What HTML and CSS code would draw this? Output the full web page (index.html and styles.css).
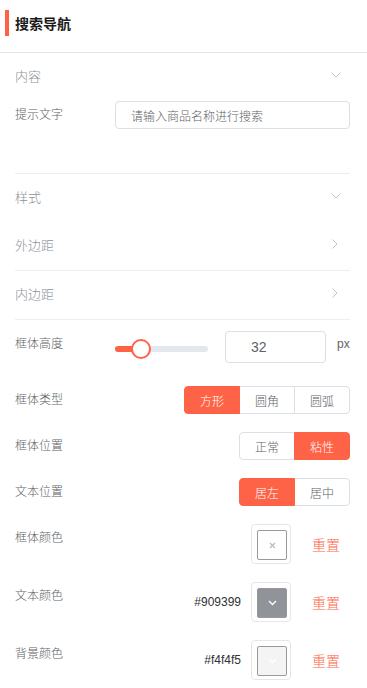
FILE: index.html
```html
<!DOCTYPE html>
<html lang="zh-CN">
<head>
  <meta charset="UTF-8" />
  <meta name="viewport" content="width=device-width, initial-scale=1.0"/>
  <title>搜索导航</title>
  <link rel="stylesheet" href="styles.css">
</head>
<body>

  <div class="panel-title"><span class="bar"></span>搜索导航</div>

  <div class="panel-body">

    <div class="collapse-item">
      <div class="collapse-head">
        <span>内容</span>
        <svg class="arrow" width="10" height="6" viewBox="0 0 10 6"><path d="M0.5 0.5 L5 5 L9.5 0.5" fill="none" stroke="#c0c4cc" stroke-width="1"/></svg>
      </div>
      <div class="collapse-content">
        <div class="form-item">
          <div class="label">提示文字</div>
          <div class="control">
            <input class="text-input" type="text" value="请输入商品名称进行搜索">
          </div>
        </div>
      </div>
    </div>

    <div class="collapse-item">
      <div class="collapse-head">
        <span>样式</span>
        <svg class="arrow" width="10" height="6" viewBox="0 0 10 6"><path d="M0.5 0.5 L5 5 L9.5 0.5" fill="none" stroke="#c0c4cc" stroke-width="1"/></svg>
      </div>
      <div class="collapse-content">

        <div class="sub-item">
          <div class="collapse-head">
            <span>外边距</span>
            <svg class="arrow-r" width="6" height="10" viewBox="0 0 6 10"><path d="M0.5 0.5 L5 5 L0.5 9.5" fill="none" stroke="#c0c4cc" stroke-width="1"/></svg>
          </div>
        </div>
        <div class="sub-item">
          <div class="collapse-head">
            <span>内边距</span>
            <svg class="arrow-r" width="6" height="10" viewBox="0 0 6 10"><path d="M0.5 0.5 L5 5 L0.5 9.5" fill="none" stroke="#c0c4cc" stroke-width="1"/></svg>
          </div>
        </div>

        <div class="form-item first">
          <div class="label">框体高度</div>
          <div class="control slider-row">
            <div class="slider">
              <div class="runway">
                <div class="fill" style="width: 26px"></div>
                <div class="thumb" style="left: 26px"></div>
              </div>
            </div>
            <input class="num-input" type="text" value="32">
            <span class="unit">px</span>
          </div>
        </div>

        <div class="form-item">
          <div class="label">框体类型</div>
          <div class="control right">
            <div class="btn-group">
              <button class="active">方形</button>
              <button>圆角</button>
              <button>圆弧</button>
            </div>
          </div>
        </div>

        <div class="form-item">
          <div class="label">框体位置</div>
          <div class="control right">
            <div class="btn-group">
              <button>正常</button>
              <button class="active">粘性</button>
            </div>
          </div>
        </div>

        <div class="form-item">
          <div class="label">文本位置</div>
          <div class="control right">
            <div class="btn-group">
              <button class="active">居左</button>
              <button>居中</button>
            </div>
          </div>
        </div>

        <div class="form-item">
          <div class="label">框体颜色</div>
          <div class="control right color-row">
            <div class="picker">
              <div class="swatch empty">
                <svg width="7" height="7" viewBox="0 0 7 7"><path d="M1 1 L6 6 M6 1 L1 6" stroke="#bbb" stroke-width="1.2"/></svg>
              </div>
            </div>
            <a class="reset">重置</a>
          </div>
        </div>

        <div class="form-item">
          <div class="label">文本颜色</div>
          <div class="control right color-row">
            <span class="hex">#909399</span>
            <div class="picker">
              <div class="swatch" style="background: #909399">
                <svg width="9" height="6" viewBox="0 0 9 6"><path d="M1 1 L4.5 4.5 L8 1" fill="none" stroke="#fff" stroke-width="1.3"/></svg>
              </div>
            </div>
            <a class="reset">重置</a>
          </div>
        </div>

        <div class="form-item last">
          <div class="label">背景颜色</div>
          <div class="control right color-row">
            <span class="hex">#f4f4f5</span>
            <div class="picker">
              <div class="swatch" style="background: #f4f4f5">
                <svg width="9" height="6" viewBox="0 0 9 6"><path d="M1 1 L4.5 4.5 L8 1" fill="none" stroke="#fff" stroke-width="1.3"/></svg>
              </div>
            </div>
            <a class="reset">重置</a>
          </div>
        </div>

      </div>
    </div>

  </div>

</body>
</html>
```

FILE: styles.css
```css
body {
  margin: 0;
  background: #fff;
  font-family: "Helvetica Neue", "Liberation Sans", "Noto Sans CJK SC", sans-serif;
  color: #606266;
}

.panel-title {
  display: flex;
  align-items: center;
  height: 26px;
  padding: 10px 0 16px 5px;
  border-bottom: 1px solid #e5e5e5;
  font-size: 14px;
  font-weight: bold;
  color: #1a1a1a;
}

.bar {
  width: 4px;
  height: 26px;
  background: #ff6347;
  margin-right: 6px;
}

.panel-body {
  padding: 0 17px 0 15px;
}

.collapse-item {
  border-bottom: 1px solid #ebeef5;
}

.collapse-item:last-child {
  border-bottom: none;
}

.collapse-head {
  display: flex;
  align-items: center;
  justify-content: space-between;
  box-sizing: border-box;
  height: 48px;
  padding-bottom: 4px;
  font-size: 13px;
  font-weight: 300;
  color: #909399;
}

.arrow {
  margin-right: 9px;
}

.arrow-r {
  margin-right: 12px;
}

.collapse-content {
  padding-bottom: 26px;
}

.collapse-item:last-child .collapse-content {
  padding-bottom: 0;
}

.sub-item {
  border-bottom: 1px solid #ebeef5;
}

.form-item {
  display: flex;
  align-items: flex-start;
  margin-bottom: 18px;
}

.form-item.last {
  margin-bottom: 0;
}

.form-item.first {
  margin-top: 10px;
}

.label {
  width: 100px;
  line-height: 28px;
  font-size: 12px;
  font-weight: 300;
  color: #606266;
}

.control {
  flex: 1;
  display: flex;
  align-items: center;
}

.control.right {
  justify-content: flex-end;
}

.text-input {
  width: 100%;
  height: 28px;
  box-sizing: border-box;
  border: 1px solid #dcdfe6;
  border-radius: 4px;
  padding: 0 15px;
  font-family: inherit;
  font-size: 12px;
  font-weight: 300;
  color: #606266;
  outline: none;
}

.slider-row {
  align-items: flex-start;
}

.slider {
  width: 93px;
  height: 38px;
  margin-right: 17px;
}

.runway {
  position: relative;
  margin-top: 16px;
  height: 6px;
  border-radius: 3px;
  background: #e4e7ed;
}

.fill {
  height: 6px;
  border-radius: 3px 0 0 3px;
  background: #ff6347;
}

.thumb {
  position: absolute;
  top: -7px;
  width: 16px;
  height: 16px;
  margin-left: -10px;
  border: 2px solid #ff6347;
  border-radius: 50%;
  background: #fff;
}

.num-input {
  width: 101px;
  height: 32px;
  margin-top: 1px;
  box-sizing: border-box;
  border: 1px solid #dcdfe6;
  border-radius: 4px;
  padding: 0 0 0 25px;
  font-family: inherit;
  font-size: 14px;
  color: #606266;
  outline: none;
}

.unit {
  margin-left: 11px;
  line-height: 28px;
  font-size: 12px;
  color: #606266;
}

.btn-group {
  display: flex;
}

.btn-group button {
  width: 56px;
  height: 28px;
  margin: 0;
  margin-left: -1px;
  padding: 0;
  border: 1px solid #dcdfe6;
  background: #fff;
  font-family: inherit;
  font-size: 12px;
  font-weight: 300;
  color: #606266;
  cursor: pointer;
}

.btn-group button:first-child {
  border-radius: 4px 0 0 4px;
}

.btn-group button:last-child {
  border-radius: 0 4px 4px 0;
}

.btn-group button.active {
  position: relative;
  background: #ff6347;
  border-color: #ff6347;
  color: #fff;
}

.color-row {
  height: 40px;
}

.hex {
  margin-right: 10px;
  font-size: 12px;
  color: #303133;
}

.picker {
  width: 40px;
  height: 40px;
  box-sizing: border-box;
  padding: 5px;
  border: 1px solid #e6e6e6;
  border-radius: 4px;
}

.swatch {
  width: 28px;
  height: 28px;
  border: 1px solid #999;
  border-radius: 2px;
  display: flex;
  align-items: center;
  justify-content: center;
}

.swatch.empty {
  background: #fff;
}

.reset {
  margin: 0 10px 0 21px;
  font-size: 14px;
  font-weight: 300;
  color: #ff6347;
  cursor: pointer;
}
```
